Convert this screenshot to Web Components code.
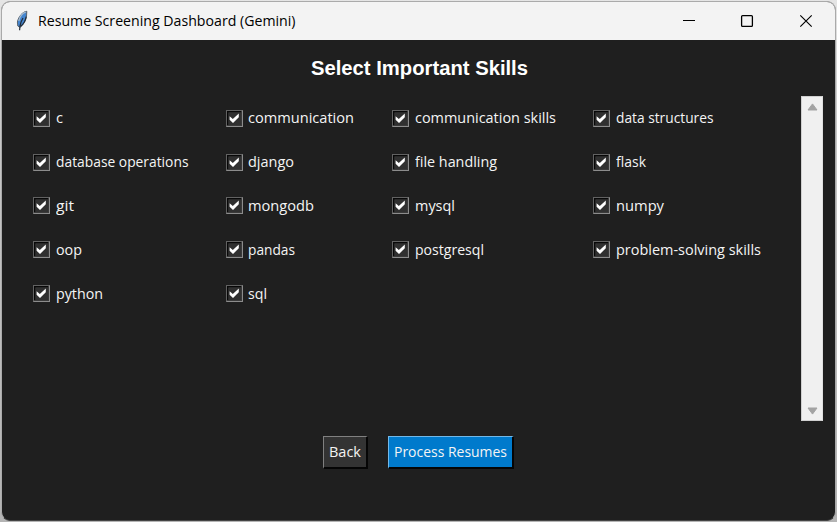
<!DOCTYPE html>
<html lang="en">
<head>
<meta charset="utf-8">
<title>Resume Screening Dashboard (Gemini)</title>
<style>
html,body{margin:0;width:837px;height:522px;overflow:hidden;background:#d2d2d2}
body{font-family:"Open Sans","Noto Sans",sans-serif}
</style>
</head>
<body>
<app-window></app-window>
<script>
// Text line with a fixed advance width.
class FitText extends HTMLElement{
  connectedCallback(){
    const r=this.attachShadow({mode:'open'});
    r.innerHTML='<style>:host{display:block;white-space:nowrap;width:max-content}span{display:inline-block;transform-origin:0 50%}</style><span><slot></slot></span>';
    const s=r.querySelector('span'),w=+this.getAttribute('w');
    const natural=s.getBoundingClientRect().width;
    if(natural&&w){s.style.transform='scaleX('+w/natural+')';this.style.width=w+'px';}
  }
}
class TitleBar extends HTMLElement{
  connectedCallback(){
    this.attachShadow({mode:'open'}).innerHTML=`<style>
    :host{display:flex;height:38px;background:#f3f3f3;color:#000;align-items:center;box-sizing:border-box;padding-left:13px}
    fit-text{font:14.3px/20px "Open Sans",sans-serif;flex:1;margin-left:9px;margin-top:-1px}
    svg{display:block;flex:none}
    </style>
    <svg width="14" height="22" viewBox="0 0 14 22"><path d="M11.8 1.3C8 1.5 3.4 6.5 2.4 12L2.8 16L5 17.4C9 14.5 11 10 11.5 6.5Z" fill="#4385d0" stroke="#59636d" stroke-width="1"/><path d="M10.8 2.2C7.5 3 4.8 6.8 3.8 11" fill="none" stroke="#a5b9cc" stroke-width="1.3"/><path d="M11.2 6.5C10.6 10 8.6 14 5.6 16.4M8 8Q5.6 12 5 16L4.6 20.3" fill="none" stroke="#222c38" stroke-width="1.2"/></svg>
    <fit-text w="257.5"><slot></slot></fit-text>
    <svg width="153" height="38" viewBox="0 0 153 38" fill="none" stroke="#000"><path d="M1 18.5h12"/><rect x="59.6" y="13.6" width="10.8" height="10.8" rx="1" stroke-width="1.3"/><path d="M118.3 13.3L129.7 24.7M129.7 13.3L118.3 24.7" stroke-width="1.15"/></svg>`;
  }
}
class SkillCheck extends HTMLElement{
  connectedCallback(){
    this.attachShadow({mode:'open'}).innerHTML=`<style>
    :host{display:flex;align-items:center;height:20px;color:#f4f4f4}
    svg{display:block;flex:none}
    fit-text{margin-left:5.6px;font:14.5px/20px "Open Sans",sans-serif}
    </style>
    <svg width="17" height="17" viewBox="0 0 17 17"><rect width="17" height="17" fill="#8c8c8c"/><path d="M0 0H17L16 1H1V16L0 17Z" fill="#626262"/><rect x="1" y="1" width="15" height="15" fill="#3a3a3a"/><path d="M1 1H15V2.5H2.5V15H1Z" fill="#080808"/><rect x="2.5" y="2.5" width="12.5" height="12.5" fill="#303030"/><path d="M3.6 6.2L6.8 9L12.8 3.6V7.2L7 13L3.6 9.8Z" fill="#fff"/></svg>
    <fit-text w="${this.getAttribute('w')}"><slot></slot></fit-text>`;
  }
}
class ScrollTrack extends HTMLElement{
  connectedCallback(){
    this.attachShadow({mode:'open'}).innerHTML=`<style>
    :host{display:flex;flex-direction:column;justify-content:space-between;align-items:center;box-sizing:border-box;width:22px;height:325px;padding:6px 0 5px 1px;background:#f0f0f0;border:1px solid #d0d0d0;border-right-color:#e0e0e0}
    svg{display:block}
    </style><svg width="11" height="8"><path d="M5.5 .9L10 7H1Z" fill="#a3a3a3" stroke="#a3a3a3" stroke-linejoin="round"/></svg><svg width="11" height="8"><path d="M5.5 7.1L10 1H1Z" fill="#a3a3a3" stroke="#a3a3a3" stroke-linejoin="round"/></svg>`;
  }
}
class PushButton extends HTMLElement{
  connectedCallback(){
    this.attachShadow({mode:'open'}).innerHTML=`<style>
    :host{display:block;box-sizing:border-box;height:33px;width:max-content;background:#333;color:#f4f4f4;padding:4px 5px 0 5px;border:1px solid #808080;border-right:2px solid #050505;border-bottom:2px solid #050505}
    :host([primary]){background:#007acc;border-top-color:#73b8e8;border-left-color:#73b8e8}
    fit-text{font:14.5px/22px "Open Sans",sans-serif}
    </style><fit-text w="${this.getAttribute('w')}"><slot></slot></fit-text>`;
  }
}
class AppWindow extends HTMLElement{
  connectedCallback(){
    const skills=[['c',7],['communication',106],['communication skills',141],['data structures',97.5],['database operations',132.5],['django',46],['file handling',82],['flask',30],['git',18],['mongodb',66],['mysql',40],['numpy',48],['oop',26],['pandas',47],['postgresql',69],['problem-solving skills',145],['python',47],['sql',19]];
    this.attachShadow({mode:'open'}).innerHTML=`<style>
    :host{display:block;box-sizing:border-box;width:837px;height:522px;padding:1px;background:linear-gradient(#e5e5e5,#c8c8c8 25%,#b4b4b4)}
    .win{box-sizing:border-box;width:835px;height:520px;border:1px solid #aaa;border-bottom-color:#444;border-radius:9px;overflow:hidden;background:#1f1f1f}
    .head{display:flex;justify-content:center;height:56px;padding-top:16px;box-sizing:border-box;margin-left:1px}
    h1{margin:0;font:bold 20px/24px "Liberation Sans",sans-serif;color:#fff}
    .body{display:flex;justify-content:space-between;padding:0 12px 0 31px;height:325px}
    .grid{display:grid;grid-template-columns:192.6px 166.4px 201px 190px;grid-auto-rows:43.8px;align-content:start;padding-top:12.4px}
    .foot{display:flex;justify-content:center;gap:20px;padding-top:15px}
    </style>
    <div class="win"><title-bar>Resume Screening Dashboard (Gemini)</title-bar>
    <div class="head"><h1><fit-text w="217">Select Important Skills</fit-text></h1></div>
    <div class="body"><div class="grid">${skills.map(([n,w])=>`<skill-check w="${w}">${n}</skill-check>`).join('')}</div><scroll-track></scroll-track></div>
    <div class="foot"><push-button w="32">Back</push-button><push-button primary w="113">Process Resumes</push-button></div></div>`;
  }
}
customElements.define('fit-text',FitText);
customElements.define('title-bar',TitleBar);
customElements.define('skill-check',SkillCheck);
customElements.define('scroll-track',ScrollTrack);
customElements.define('push-button',PushButton);
customElements.define('app-window',AppWindow);
</script>
</body>
</html>
